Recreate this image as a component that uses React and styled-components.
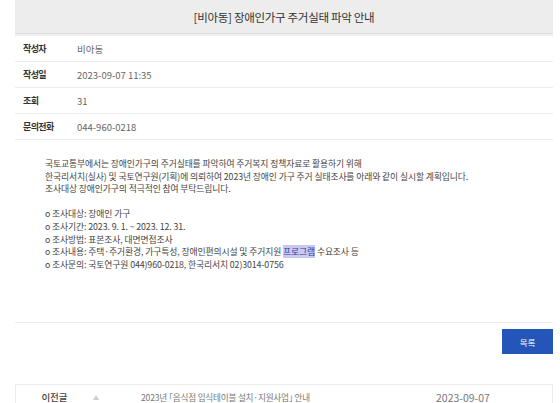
import React from "react";
import styled, { createGlobalStyle } from "styled-components";

const Global = createGlobalStyle`
  html, body { margin: 0; padding: 0; background: #fff; }
  body { font-family: "Noto Sans CJK KR", "Noto Sans", sans-serif; color: #333; }
`;

const Page = styled.div`
  width: 538px;
  margin-left: 15px;
  display: flex;
  flex-direction: column;
`;

const TitleBar = styled.div`
  height: 33px;
  background: #ededed;
  border-bottom: 1px solid #dcdcdc;
  box-shadow: 0 2px 0 #f0f0f0;
  display: flex;
  align-items: center;
  justify-content: center;
  font-size: 11.5px;
  color: #333;
  letter-spacing: -0.3px;
`;

const InfoTable = styled.div`
  margin-top: 2px;
  display: flex;
  flex-direction: column;
`;

const InfoRow = styled.div`
  height: 25px;
  display: flex;
  align-items: center;
  border-bottom: 1px solid #ececec;
`;

const Label = styled.div`
  width: 54px;
  padding-left: 8px;
  font-size: 9px;
  font-weight: 700;
  color: #333;
  letter-spacing: -0.6px;
`;

const Value = styled.div`
  font-size: 9.5px;
  color: #666;
`;

const Content = styled.div`
  padding: 18px 0 0 30px;
  height: 164px;
  border-bottom: 1px solid #ececec;
  font-size: 8.8px;
  line-height: 12.6px;
  color: #444;
  letter-spacing: -0.1px;
`;

const Line = styled.div`
  white-space: nowrap;
  min-height: 12.6px;
`;

const Mark = styled.span`
  background: #c9c8f0;
  color: #3a3aa0;
`;

const ButtonBar = styled.div`
  display: flex;
  justify-content: flex-end;
  padding-top: 6px;
  height: 55px;
`;

const ListButton = styled.button`
  width: 51px;
  height: 25px;
  border: none;
  background: #2356b8;
  color: #fff;
  font-family: inherit;
  font-size: 8.5px;
  padding: 0;
`;

const NavRow = styled.div`
  height: 24px;
  border: 1px solid #ececec;
  border-bottom: none;
  display: flex;
  align-items: center;
  font-size: 8.6px;
  color: #777;
`;

const NavLabel = styled.div`
  width: 77px;
  text-align: center;
  color: #444;
  font-weight: 500;
  font-size: 9.5px;
`;

const Arrow = styled.div`
  width: 48px;
  font-size: 6px;
  color: #ccc;
`;

const NavTitle = styled.div`
  flex: 1;
  letter-spacing: -0.2px;
  white-space: nowrap;
`;

const NavDate = styled.div`
  width: 116px;
  font-size: 10.5px;
`;

export default function App() {
  return (
    <>
      <Global />
      <Page>
        <TitleBar>[비아동] 장애인가구 주거실태 파악 안내</TitleBar>
        <InfoTable>
          <InfoRow><Label>작성자</Label><Value>비아동</Value></InfoRow>
          <InfoRow><Label>작성일</Label><Value>2023-09-07 11:35</Value></InfoRow>
          <InfoRow><Label>조회</Label><Value>31</Value></InfoRow>
          <InfoRow><Label>문의전화</Label><Value>044-960-0218</Value></InfoRow>
        </InfoTable>
        <Content>
          <Line>국토교통부에서는 장애인가구의 주거실태를 파악하여 주거복지 정책자료로 활용하기 위해</Line>
          <Line>한국리서치(실사) 및 국토연구원(기획)에 의뢰하여 2023년 장애인 가구 주거 실태조사를 아래와 같이 실시할 계획입니다.</Line>
          <Line>조사대상 장애인가구의 적극적인 참여 부탁드립니다.</Line>
          <Line />
          <Line>o 조사대상: 장애인 가구</Line>
          <Line>o 조사기간: 2023. 9. 1. ~ 2023. 12. 31.</Line>
          <Line>o 조사방법: 표본조사, 대면면접조사</Line>
          <Line>o 조사내용: 주택·주거환경, 가구특성, 장애인편의시설 및 주거지원 <Mark>프로그램</Mark> 수요조사 등</Line>
          <Line>o 조사문의: 국토연구원 044)960-0218, 한국리서치 02)3014-0756</Line>
        </Content>
        <ButtonBar><ListButton>목록</ListButton></ButtonBar>
        <NavRow>
          <NavLabel>이전글</NavLabel>
          <Arrow>▲</Arrow>
          <NavTitle>2023년 ｢음식점 입식테이블 설치·지원사업｣ 안내</NavTitle>
          <NavDate>2023-09-07</NavDate>
        </NavRow>
      </Page>
    </>
  );
}
